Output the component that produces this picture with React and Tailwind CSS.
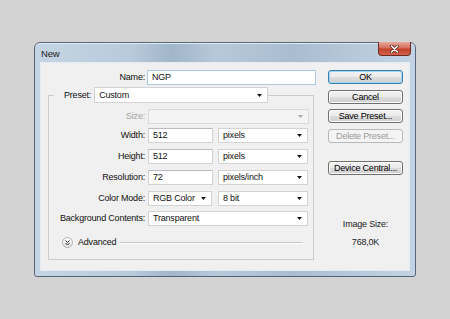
import React from "react";

const Arrow = ({ disabled }) => (
  <svg width="5" height="3" viewBox="0 0 5 3" className="shrink-0">
    <polygon points="0,0 5,0 2.5,3" fill={disabled ? "#a8a8a8" : "#111"} />
  </svg>
);

function Select({ value, w, disabled, className = "" }) {
  return (
    <div
      className={`${w} ${className} h-[15px] flex items-center justify-between pl-[4px] pr-[5px] border ${
        disabled ? "bg-[#f4f4f4] border-[#dadada]" : "bg-white border-[#d2d2d2]"
      }`}
    >
      <span className="leading-none">{value}</span>
      <Arrow disabled={disabled} />
    </div>
  );
}

function Input({ value, w, focus }) {
  return (
    <div
      className={`${w} h-[15px] flex items-center pl-[4px] bg-white border ${
        focus ? "border-[#a9cbe8]" : "border-[#d2d2d2] border-t-[#b9bbc1]"
      }`}
    >
      <span className="leading-none">{value}</span>
    </div>
  );
}

function Button({ children, variant, className = "" }) {
  const base =
    "w-[75px] h-[14px] flex items-center justify-center rounded-[3px] border leading-none";
  if (variant === "disabled")
    return (
      <div className={`${base} ${className} border-[#b5b9bc] bg-[#f4f4f4] text-[#9a9a9a]`}>
        {children}
      </div>
    );
  if (variant === "default")
    return (
      <div
        className={`${base} ${className} border-[#3c7fb1] bg-[linear-gradient(#f2f2f2_0%,#ebebeb_50%,#dddddd_50%,#d2d2d2_100%)] shadow-[inset_0_0_0_1px_#9fd5f2] text-black`}
      >
        {children}
      </div>
    );
  return (
    <div
      className={`${base} ${className} border-[#707070] bg-[linear-gradient(#f2f2f2_0%,#ebebeb_50%,#dddddd_50%,#cfcfcf_100%)] shadow-[inset_0_0_0_1px_#fbfbfb] text-black`}
    >
      {children}
    </div>
  );
}

function Row({ label, children, className = "", labelClass = "" }) {
  return (
    <div className={`flex items-center h-[15px] ${className}`}>
      <div className={`w-[96px] text-right leading-none ${labelClass}`}>{label}</div>
      <div className="ml-[3px] flex gap-[5px]">{children}</div>
    </div>
  );
}

export default function App() {
  return (
    <div className="w-[450px] h-[319px] bg-[#d3d3d3] pt-[42px] pl-[34px] font-['Liberation_Sans',Arial,sans-serif] text-[9px] tracking-[-0.2px] text-[#111] overflow-hidden">
      <div className="w-[382px] h-[235px] flex flex-col border border-[#56667a] rounded-t-[6px] rounded-b-[3px] bg-[linear-gradient(to_right,#c6d5e3_0%,#b9cadb_25%,#a2b6ca_36%,#b7c8d9_48%,#aabdd0_68%,#c3d3e3_100%)] shadow-[inset_0_1px_0_#e4edf5]">
        {/* title bar */}
        <div className="h-[19px] flex items-start justify-between">
          <div className="pl-[6px] pt-[6px] text-[9.5px] leading-none text-[#1c1c1c]">New</div>
          <div className="mr-[4px] -mt-px w-[33px] h-[14px] rounded-b-[4px] border border-[#6e2a22] border-t-0 bg-[linear-gradient(#e9a99c_0%,#d4705c_45%,#c2402a_55%,#d2644b_100%)] flex items-center justify-center">
            <svg width="9" height="8" viewBox="0 0 9 8">
              <path d="M1.5 1 L7.5 7 M7.5 1 L1.5 7" stroke="#4b1a14" strokeWidth="3" strokeLinecap="round" />
              <path d="M1.5 1 L7.5 7 M7.5 1 L1.5 7" stroke="#ffffff" strokeWidth="1.6" strokeLinecap="round" />
            </svg>
          </div>
        </div>
        {/* client */}
        <div className="mx-[5px] h-[209px] border border-[#e3ecf5] bg-[#f0f0f0] flex">
          {/* left column */}
          <div className="w-[275px] pt-[7px] flex flex-col">
            <div className="flex items-center h-[15px]">
              <div className="w-[104px] text-right leading-none">Name:</div>
              <div className="ml-[2px]">
                <Input w="w-[169px]" value="NGP" focus />
              </div>
            </div>
            <fieldset className="mt-[2px] ml-[7px] w-[266px] border border-[#cbcbcb] pb-[11px]">
              <legend className="ml-[5px] pl-[10px] flex items-center h-[16px]">
                <span className="leading-none">Preset:</span>
                <Select w="w-[174px]" value="Custom" className="ml-[3px] h-[16px]" />
              </legend>
              <Row label="Size:" className="mt-[6px]" labelClass="text-[#a3a3a3]">
                <Select w="w-[161px]" value="" disabled />
              </Row>
              <Row label="Width:" className="mt-[4px]">
                <Input w="w-[65px]" value="512" />
                <Select w="w-[90px]" value="pixels" />
              </Row>
              <Row label="Height:" className="mt-[6px]">
                <Input w="w-[65px]" value="512" />
                <Select w="w-[90px]" value="pixels" />
              </Row>
              <Row label="Resolution:" className="mt-[6px]">
                <Input w="w-[65px]" value="72" />
                <Select w="w-[90px]" value="pixels/inch" />
              </Row>
              <Row label="Color Mode:" className="mt-[6px]">
                <Select w="w-[64px]" value="RGB Color" />
                <Select w="w-[90px]" value="8 bit" className="ml-[1px]" />
              </Row>
              <Row label="Background Contents:" className="mt-[5px]">
                <Select w="w-[160px]" value="Transparent" />
              </Row>
              <div className="mt-[11px] flex items-center h-[11px]">
                <div className="ml-[13px] w-[11px] h-[11px] rounded-full border border-[#b4b4b4] bg-[linear-gradient(#ffffff,#e2e2e2)] flex items-center justify-center">
                  <svg width="5" height="6" viewBox="0 0 5 6">
                    <path d="M0.5 0.5 L2.5 2.5 L4.5 0.5 M0.5 3 L2.5 5 L4.5 3" stroke="#222" strokeWidth="1" fill="none" />
                  </svg>
                </div>
                <span className="ml-[5px] leading-none">Advanced</span>
                <div className="ml-[4px] mr-[10px] flex-1 h-[2px] border-t border-[#c6c6c6] border-b border-b-white"></div>
              </div>
            </fieldset>
          </div>
          {/* right column */}
          <div className="ml-[12px] w-[75px] pt-[7px] flex flex-col items-center">
            <Button variant="default">OK</Button>
            <Button className="mt-[6px]">Cancel</Button>
            <Button className="mt-[5px]">Save Preset...</Button>
            <Button variant="disabled" className="mt-[6px]">Delete Preset...</Button>
            <Button className="mt-[18px]">Device Central...</Button>
            <div className="mt-[45px] leading-none text-[#222]">Image Size:</div>
            <div className="mt-[9px] leading-none text-[#222]">768,0K</div>
          </div>
        </div>
      </div>
    </div>
  );
}
